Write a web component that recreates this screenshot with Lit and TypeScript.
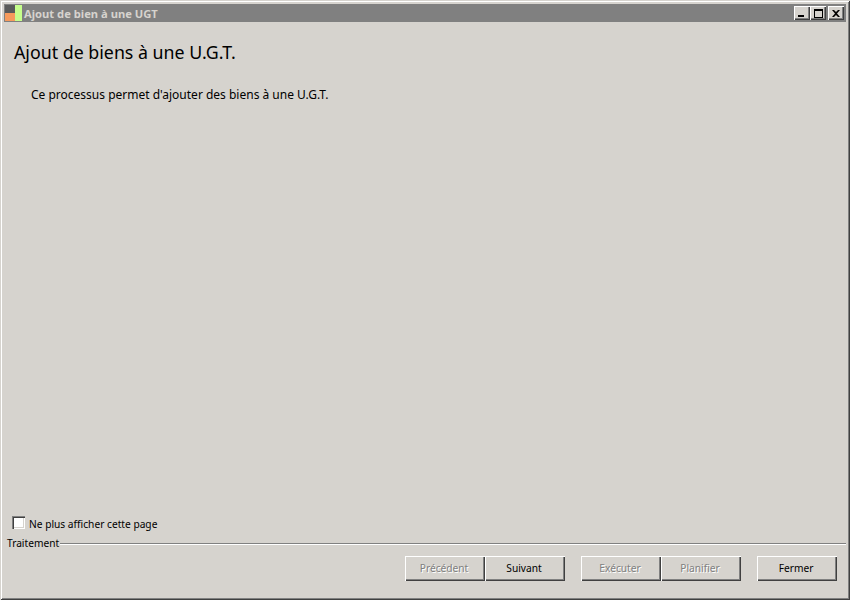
import { LitElement, html, css } from "lit";
import { customElement } from "lit/decorators.js";

@customElement("app-root")
export class AppRoot extends LitElement {
  static styles = css`
    :host { display: block; width: 850px; height: 600px; overflow: hidden; font-family: "Noto Sans", sans-serif; font-size: 10.2px; color: #000; }
    .window { box-sizing: border-box; width: 850px; height: 600px; background: #d6d3ce; display: flex; flex-direction: column; padding: 4px 4px 2px; box-shadow: inset 1px 1px 0 #d6d3ce, inset -1px -1px 0 #404040, inset 2px 2px 0 #fff, inset -2px -2px 0 #808080; }
    .titlebar { height: 18px; flex: none; background: #808080; display: flex; align-items: center; padding: 0 2px 0 1px; color: #d6d3ce; font-weight: bold; font-size: 11.2px; }
    .appicon { width: 17px; height: 16px; flex: none; display: block; margin-right: 2px; }
    .ttext { flex: 1; white-space: nowrap; }
    .wbtns { display: flex; }
    .wbtn { box-sizing: border-box; width: 16px; height: 14px; background: #d6d3ce; box-shadow: inset 1px 1px 0 #fff, inset -1px -1px 0 #404040, inset -2px -2px 0 #808080; display: flex; align-items: center; justify-content: center; }
    .wbtn.close { margin-left: 2px; }
    .content { flex: 1; display: flex; flex-direction: column; margin: 0 -2px; min-height: 0; }
    h1 { margin: 20px 0 0 12px; font-size: 17.8px; font-weight: normal; line-height: 20px; }
    .desc { margin: 25px 0 0 29px; font-size: 12px; line-height: 16px; }
    .spacer { flex: 1; }
    .check { display: flex; align-items: flex-start; margin-left: 10px; gap: 4px; height: 14px; line-height: 14px; }
    .box { box-sizing: border-box; width: 13px; height: 13px; margin-top: -1px; background: #fff; box-shadow: inset 1px 1px 0 #808080, inset 2px 2px 0 #404040, inset -1px -1px 0 #fff, inset -2px -2px 0 #d6d3ce; }
    .sep-row { display: flex; align-items: center; margin: 6px 0 1px 5px; height: 12px; line-height: 12px; }
    .sep-line { flex: 1; height: 2px; margin: 2px 2px 0 1px; background: #808080; border-bottom: 1px solid #fff; box-sizing: border-box; }
    .buttons { display: flex; margin: 6px 11px 0 0; justify-content: flex-end; height: 25px; }
    .group { display: flex; }
    .group + .group { margin-left: 16px; }
    .btn { box-sizing: border-box; width: 80px; height: 25px; padding: 0 2px 1px 0; background: #d6d3ce; box-shadow: inset 1px 1px 0 #fff, inset -1px -1px 0 #404040, inset -2px -2px 0 #808080; display: flex; align-items: center; justify-content: center; }
    .btn.off { color: #808080; text-shadow: 1px 1px 0 #fff; }
    .bottom { height: 17px; flex: none; }
  `;

  render() {
    return html`<div class="window">
      <div class="titlebar">
        <svg class="appicon" viewBox="0 0 17 16">
          <rect x="0" y="0" width="10" height="16" fill="#5a5a5a"/>
          <rect x="0" y="8" width="10" height="8" fill="#f79a5c"/>
          <rect x="10" y="0" width="7" height="16" fill="#c6ff8c"/>
        </svg>
        <span class="ttext">Ajout de bien à une UGT</span>
        <div class="wbtns">
          <div class="wbtn"><svg width="8" height="8"><rect x="0" y="6" width="6" height="2" fill="#000"/></svg></div>
          <div class="wbtn"><svg width="9" height="9"><path d="M0 0h9v9H0zM1 2v6h7V2z" fill="#000" fill-rule="evenodd"/></svg></div>
          <div class="wbtn close"><svg width="8" height="7"><path d="M0 0h2l2 2 2-2h2L5 3.500 8 7H6L4 5 2 7H0l3-3.500z" fill="#000"/></svg></div>
        </div>
      </div>
      <div class="content">
        <h1>Ajout de biens à une U.G.T.</h1>
        <p class="desc">Ce processus permet d'ajouter des biens à une U.G.T.</p>
        <div class="spacer"></div>
        <div class="check"><span class="box"></span><span>Ne plus afficher cette page</span></div>
        <div class="sep-row"><span>Traitement</span><span class="sep-line"></span></div>
        <div class="buttons">
          <div class="group"><div class="btn off">Précédent</div><div class="btn">Suivant</div></div>
          <div class="group"><div class="btn off">Exécuter</div><div class="btn off">Planifier</div></div>
          <div class="group"><div class="btn">Fermer</div></div>
        </div>
        <div class="bottom"></div>
      </div>
    </div>`;
  }
}
